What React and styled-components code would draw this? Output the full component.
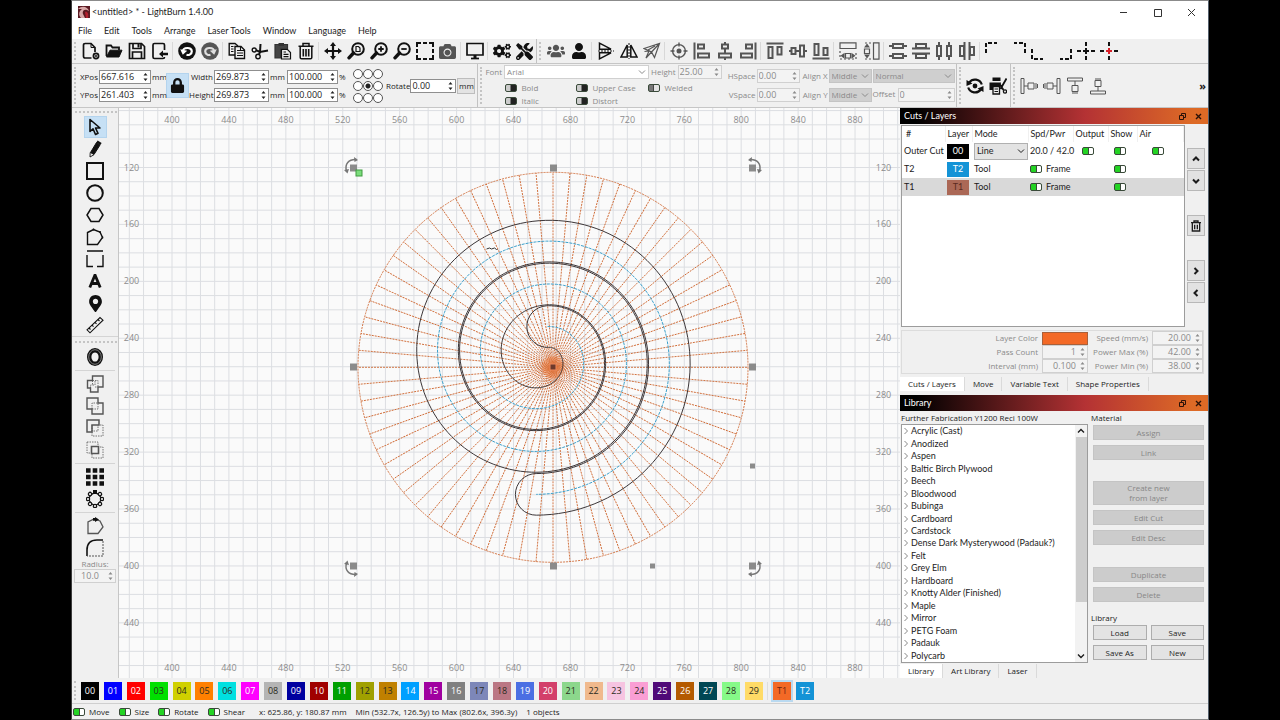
import React, { useState } from 'react';
import styled, { createGlobalStyle, css } from 'styled-components';
import {
    FaUsers,
    FaUser,
    FaCamera,
    FaCogs,
    FaTools,
    FaLock,
    FaMapMarkerAlt,
} from 'react-icons/fa';

const GlobalStyle = createGlobalStyle`
    * {
        box-sizing: border-box;
    }

    body {
        margin: 0;
        background: #000;
        color: #1c1c1c;
        font-family: 'Open Sans', 'Noto Sans', sans-serif;
        font-size: 8px;
        line-height: 12px;
    }

    button, input, select {
        margin: 0;
        font: inherit;
        color: inherit;
    }

    svg {
        display: block;
        flex: none;
    }
`;

const systemText = css`
    font-family: Lato, 'Open Sans', sans-serif;
    font-size: 9px;
    font-weight: normal;
`;

/* ---------- window ---------- */

const Frame = styled.div`
    height: 100vh;
    min-height: 600px;
    padding: 0 71px;
`;

const Window = styled.div`
    display: flex;
    flex-direction: column;
    height: 100%;
    background: #f0f0f0;
    border: 1px solid #8b8b8b;
    border-left-color: #3c3c3c;
    border-right-color: #55606c;
`;

const TitleBar = styled.header`
    display: flex;
    align-items: center;
    height: 22px;
    padding-left: 6px;
    background: #fff;
`;

const Title = styled.h1`
    ${systemText}
    flex: 1;
    margin: 0 0 0 2px;
`;

const WindowButton = styled.button`
    display: flex;
    align-items: center;
    justify-content: center;
    width: 34px;
    height: 20px;
    padding: 0;
    border: 0;
    background: none;
`;

const MenuBar = styled.nav`
    ${systemText}
    display: flex;
    align-items: center;
    height: 16px;
    padding-left: 6px;
    gap: 12px;
    background: #fff;
`;

const MenuLink = styled.a`
    color: inherit;
    text-decoration: none;
`;

/* ---------- toolbars ---------- */

const Toolbar = styled.div`
    display: flex;
    align-items: center;
    height: 25px;
    border-bottom: 1px solid #c6c6c6;
`;

const Grip = styled.div`
    align-self: stretch;
    width: 2px;
    margin: 3px 3px 3px 2px;
    border-left: 2px dotted #c4c4c4;
`;

const Divider = styled.div`
    align-self: stretch;
    width: 1px;
    margin: 3px 2px 3px 1px;
    background: #d8d8d8;
`;

const Section = styled.div`
    align-self: stretch;
    width: 1px;
    background: #c2c2c2;
`;

const IconButton = styled.button`
    display: flex;
    align-items: center;
    justify-content: center;
    flex: none;
    width: 23px;
    height: 22px;
    padding: 0;
    border: 1px solid ${p => (p.$active ? '#b4d4ee' : 'transparent')};
    background: ${p => (p.$active ? '#c6e0f5' : 'none')};
    color: ${p => (p.disabled ? '#555' : '#111')};
`;

const PropertyBar = styled.div`
    display: flex;
    align-items: center;
    height: 44px;
    border-bottom: 1px solid #c6c6c6;
`;

const Geometry = styled.div`
    display: grid;
    grid-template-columns: 19px 52px 13px 22px 24px 55px 16px 51px 10px;
    grid-template-rows: 14px 14px;
    gap: 4px 1px;
    align-items: center;
    color: #222;
`;

const LockButton = styled(IconButton)`
    grid-row: 1 / 3;
    grid-column: 4;
    height: 25px;
`;

const FieldLabel = styled.label`
    white-space: nowrap;
    text-align: right;
`;

const Anchors = styled.div`
    display: grid;
    grid-template-columns: repeat(3, 10px);
    gap: 2px 0;
    margin: 0 3px 0 4px;
`;

const AnchorRadio = styled.input`
    appearance: none;
    width: 10px;
    height: 10px;
    border: 1px solid #555;
    border-radius: 50%;
    background: #fff;

    &:checked {
        background: radial-gradient(#222 0 2px, #fff 3px);
    }
`;

const UnitButton = styled.button`
    width: 18px;
    height: 16px;
    margin: 0 2px 0 1px;
    padding: 0;
    border: 1px solid #bdbdbd;
    background: #e3e3e3;
    text-align: center;
`;

const TextOptions = styled.div`
    display: flex;
    flex-direction: column;
    color: #8a8a8a;
`;

const FontRow = styled.div`
    display: flex;
    align-items: center;
    gap: 2px;
    height: 16px;
`;

const StyleGrid = styled.div`
    display: grid;
    grid-template-columns: 71px 72px auto;
    padding: 1px 0 0 20px;
`;

const Check = styled.label`
    display: flex;
    align-items: center;
    gap: 4px;
    height: 13px;
    white-space: nowrap;
`;

const SpacingGrid = styled.div`
    display: grid;
    grid-template-columns: 28px 43px 27px 43px 82px;
    grid-template-rows: 14px 14px;
    gap: 5px 1px;
    align-items: center;
    margin: 0 1px 0 6px;
    color: #8a8a8a;
`;

const OffsetCell = styled.div`
    display: flex;
    justify-content: space-between;
`;

const More = styled.button`
    margin-left: auto;
    padding: 0 2px;
    border: 0;
    background: none;
    font-size: 11px;
    font-weight: bold;
`;

/* ---------- fields ---------- */

const SpinBox = styled.span`
    display: flex;
    align-items: center;
    width: ${p => (p.$width ? `${p.$width}px` : '100%')};
    height: 14px;
    border: 1px solid ${p => (p.$dim ? '#d0d0d0' : '#8f8f8f')};
    background: ${p => (p.$dim ? '#f3f3f3' : '#fff')};
    color: ${p => (p.$dim ? '#8a8a8a' : '#222')};
    font-size: 9px;
`;

const SpinInput = styled.input`
    flex: 1;
    min-width: 0;
    height: 12px;
    padding: 0 2px 0 1px;
    border: 0;
    outline: 0;
    background: none;
    text-align: ${p => p.$align || 'left'};
`;

const SelectBox = styled.span`
    display: grid;
    align-items: center;
    width: ${p => (p.$width ? `${p.$width}px` : '100%')};
    height: ${p => p.$height || 14}px;
    border: 1px solid ${p => p.$border || '#c4c4c4'};
    background: ${p => p.$fill || '#cfcfcf'};

    svg, select {
        grid-area: 1 / 1;
    }

    svg {
        justify-self: end;
        margin-right: 2px;
        pointer-events: none;
    }
`;

const Select = styled.select`
    appearance: none;
    width: 100%;
    padding: 0 10px 0 2px;
    border: 0;
    outline: 0;
    background: none;
    opacity: 1;
`;

const Toggle = styled.input`
    appearance: none;
    flex: none;
    width: 12px;
    height: 8px;
    border: 1px solid #3a4a3a;
    border-radius: 2px;
    background: linear-gradient(90deg, #ccc 0 4px, #222 5px);

    &:checked {
        background: linear-gradient(90deg, #24d324 0 5px, #3a4a3a 5px 6px, #fff 6px);
    }

    &:checked:disabled {
        background: linear-gradient(90deg, #777 0 4px, #444 4px 5px, #e4e4e4 5px);
    }
`;

/* ---------- main area ---------- */

const Main = styled.main`
    display: flex;
    flex: 1;
    min-height: 0;
`;

const ToolColumn = styled.div`
    display: flex;
    flex-direction: column;
    align-items: center;
    width: 47px;
    padding-top: 3px;
    border-right: 1px solid #c6c6c6;
`;

const HorizontalGrip = styled.div`
    align-self: stretch;
    margin: 0 1px 3px 3px;
    border-top: 2px dotted #c4c4c4;
`;

const HorizontalRule = styled.div`
    align-self: stretch;
    height: 1px;
    margin: ${p => (p.$tight ? '0 0 4px' : '2px 3px')};
    background: #d4d4d4;
`;

const RadiusLabel = styled.label`
    height: 10px;
    color: #8a8a8a;
    line-height: 10px;
`;

const CanvasArea = styled.section`
    flex: 1;
    min-width: 0;
    overflow: hidden;
    background: #fafafa;
`;

const Dock = styled.aside`
    display: grid;
    grid-template-rows: minmax(0, 1fr) minmax(0, 1fr);
    gap: 4px;
    width: 308px;
`;

const Panel = styled.section`
    display: flex;
    flex-direction: column;
    min-height: 0;
`;

const PanelHeader = styled.header`
    display: flex;
    align-items: center;
    height: 16px;
    padding: 0 2px 0 4px;
    background: linear-gradient(90deg, #000 5%, #b43234 60%, #dd6a26 95%);
    color: #fff;
`;

const PanelTitle = styled.h2`
    ${systemText}
    flex: 1;
    margin: 0;
`;

const PanelButton = styled.button`
    display: flex;
    align-items: center;
    justify-content: center;
    width: 16px;
    height: 14px;
    padding: 0;
    border: 0;
    background: none;
    color: #2a1208;
`;

const CutsBody = styled.div`
    display: flex;
    flex: 1;
    min-height: 0;
    margin: 1px 3px 3px 1px;
    gap: 2px;
`;

const TableBox = styled.div`
    flex: 1;
    border: 1px solid #9c9c9c;
    background: #fff;
`;

const LayerTable = styled.table`
    ${systemText}
    width: 100%;
    table-layout: fixed;
    border-collapse: collapse;

    th, td {
        height: 18px;
        padding: 0 0 0 2px;
        font-weight: normal;
        text-align: left;
        white-space: nowrap;
    }

    th {
        height: 16px;
        border-right: 1px solid #f0f0f0;
    }

    th:first-child {
        padding-left: 4px;
    }
`;

const LayerRow = styled.tr`
    background: ${p => (p.$selected ? '#d9d9d9' : 'transparent')};
`;

const LayerChip = styled.span`
    display: block;
    width: 22px;
    height: 15px;
    background: ${p => p.$fill};
    color: ${p => p.$ink};
    line-height: 14px;
    text-align: center;
`;

const CellFlex = styled.span`
    display: flex;
    align-items: center;
    gap: 4px;
    padding-left: ${p => p.$indent || 0}px;
`;

const SideButtons = styled.div`
    display: flex;
    flex-direction: column;
    width: 18px;
    padding-top: 23px;
    gap: 1px;
`;

const SideButton = styled.button`
    display: flex;
    align-items: center;
    justify-content: center;
    height: 21px;
    margin-top: ${p => (p.$apart ? 23 : 0)}px;
    padding: 0;
    border: 1px solid #b8b8b8;
    background: #e2e2e2;
`;

const CutFields = styled.div`
    display: grid;
    grid-template-columns: 1fr 46px 56px 51px;
    gap: 0 4px;
    align-items: center;
    height: 44px;
    margin: 0 4px 3px 1px;
    border: 1px solid #dcdcdc;
    color: #8a8a8a;
`;

const ColorButton = styled.button`
    height: 13px;
    padding: 0;
    border: 1px solid #a9603a;
    background: #f36926;
`;

const Tabs = styled.div`
    display: flex;
    height: 14px;
`;

const Tab = styled.button`
    height: 14px;
    padding: 0 8px;
    border: 0;
    border-right: 1px solid #dadada;
    background: ${p => (p.$active ? '#fff' : 'none')};
    line-height: 14px;
`;

const LibraryBody = styled.div`
    display: grid;
    grid-template-columns: minmax(0, 1fr) 116px;
    flex: 1;
    min-height: 0;
    padding: 0 1px;
`;

const LibraryLeft = styled.div`
    display: flex;
    flex-direction: column;
    min-height: 0;
    margin-right: 3px;
`;

const Caption = styled.div`
    height: 13px;
    line-height: 13px;
    white-space: nowrap;
`;

const TreeBox = styled.div`
    display: flex;
    flex: 1;
    min-height: 0;
    margin-bottom: 1px;
    border: 1px solid #9c9c9c;
    background: #fff;
`;

const Tree = styled.ul`
    ${systemText}
    display: flex;
    flex-direction: column;
    flex: 1;
    margin: 0;
    padding: 0;
    list-style: none;
`;

const TreeItem = styled.li`
    display: flex;
    align-items: center;
    flex: 1;
    min-height: 0;
    gap: 1px;
    white-space: nowrap;

    svg {
        color: #888;
    }
`;

const ScrollTrack = styled.div`
    display: flex;
    flex-direction: column;
    align-items: center;
    width: 12px;
    background: #f2f2f2;
`;

const ScrollThumb = styled.div`
    flex: 167;
    width: 11px;
    background: #cdcdcd;
`;

const ScrollRest = styled.div`
    flex: 48;
`;

const ScrollArrow = styled.button`
    display: flex;
    align-items: center;
    justify-content: center;
    width: 12px;
    height: 12px;
    padding: 0;
    border: 0;
    background: none;
`;

const LibraryRight = styled.div`
    display: flex;
    flex-direction: column;
    padding-right: 1px;
`;

const ButtonStack = styled.div`
    display: flex;
    flex-direction: column;
    gap: 5px;
    padding: 1px 2px 0;
    margin-bottom: ${p => p.$after || 0}px;
`;

const PushButton = styled.button`
    height: ${p => (p.$tall ? 24 : 15)}px;
    padding: 0;
    border: 1px solid ${p => (p.disabled ? '#c4c4c4' : '#adadad')};
    background: ${p => (p.disabled ? '#cccccc' : '#e3e3e3')};
    color: ${p => (p.disabled ? '#878787' : '#1c1c1c')};
    line-height: ${p => (p.$tall ? 10 : 12)}px;
    text-align: center;
`;

const ButtonPair = styled.div`
    display: grid;
    grid-template-columns: 1fr 1fr;
    gap: 5px 4px;
    padding: 1px 2px 0;
`;

/* ---------- palette and status ---------- */

const Palette = styled.div`
    display: flex;
    align-items: center;
    height: 26px;
    border-bottom: 1px solid #cfcfcf;
`;

const SwatchRow = styled.div`
    display: flex;
    justify-content: space-between;
    width: 682px;
    margin: 0 4px 0 2px;
`;

const Swatch = styled.button`
    width: 18px;
    height: 18px;
    padding: 0;
    border: 0;
    background: ${p => p.$fill};
    color: ${p => p.$ink};
    font-size: 9px;
    line-height: 18px;
    text-align: center;
    ${p =>
        p.$active &&
        css`
            outline: 2px solid #b9d9f0;
        `}
`;

const ToolSwatches = styled.div`
    display: flex;
    gap: 5px;
    padding-left: 5px;
    border-left: 1px solid #ddd;
`;

const StatusBar = styled.footer`
    display: flex;
    align-items: center;
    height: 15px;
    padding: 1px 0 0 1px;
    gap: 9px;
    white-space: nowrap;
`;

const Coordinates = styled.span`
    margin-left: 5px;
`;

/* ---------- icons ---------- */

const Icon = ({ size = 18, children, width = 2 }) => (
    <svg
        width={size}
        height={size}
        viewBox="0 0 18 18"
        fill="none"
        stroke="currentColor"
        strokeWidth={width}
        aria-hidden="true"
    >
        {children}
    </svg>
);

const Chevron = ({ dir = 'down', size = 8, width = 1 }) => {
    const turn = { down: 0, left: 90, up: 180, right: 270 }[dir];
    return (
        <svg
            width={size}
            height={size}
            viewBox="0 0 8 8"
            fill="none"
            stroke="currentColor"
            strokeWidth={width}
            aria-hidden="true"
        >
            <path d="M1 2.5L4 5.5L7 2.5" transform={`rotate(${turn} 4 4)`} />
        </svg>
    );
};

const Arrows = () => (
    <svg width="9" height="12" viewBox="0 0 9 12" fill="currentColor" aria-hidden="true">
        <path d="M2.5 4.5L4.5 2L6.5 4.5ZM2.5 7.5L4.5 10L6.5 7.5Z" />
    </svg>
);

const Logo = () => (
    <svg width="12" height="12" viewBox="0 0 12 12" aria-hidden="true">
        <rect width="12" height="12" fill="#5b1a22" />
        <path d="M0 3C4-1 10 1 11 5L9 4C6 3 4 5 5 8L7 12H3C0 9 1 5 4 3Z" fill="#d9a8a8" />
        <path d="M7 6C9 5 11 7 10 12H8Z" fill="#b3202e" />
    </svg>
);

const lens = <path d="M6.5 11L2 15.8" strokeWidth="3.4" strokeLinecap="round" />;

const icons = {
    new: (
        <Icon width={1.7}>
            <path d="M9.5 16H3.2Q1.5 16 1.5 14.3V3.2Q1.5 1.5 3.2 1.5H9L13 5.5V10" />
            <path d="M9 1.5V5.5H13" strokeWidth="1" />
            <circle cx="14" cy="14" r="2.6" />
            <path d="M14 12.8V15.2M12.8 14H15.2" strokeWidth="1" />
        </Icon>
    ),
    open: (
        <Icon width={1.8}>
            <path d="M1.5 14V3.5H6L7.5 5.5H14V8" />
            <path d="M1.5 15L5 8.2H17L14 15Z" fill="currentColor" strokeWidth="1" />
        </Icon>
    ),
    save: (
        <Icon width={1.7}>
            <path d="M1.5 1.5H13.5L16.5 4.5V16.5H1.5Z" />
            <path d="M5 2V6.5H13V2" />
            <path d="M9.5 2H11.5V5.5H9.5Z" fill="currentColor" stroke="none" />
            <path d="M4.5 16V10H13.5V16" />
        </Icon>
    ),
    export: (
        <Icon width={1.7}>
            <path d="M13.5 8V3Q13.5 1.5 12 1.5H3.5Q2 1.5 2 3V15Q2 16.5 3.5 16.5H12Q13.5 16.5 13.5 15" />
            <path d="M8 12L12 8.5V10.8H17V13.2H12V15.5Z" fill="currentColor" stroke="none" />
        </Icon>
    ),
    undo: (
        <Icon>
            <circle cx="9" cy="9" r="8.8" fill="currentColor" stroke="none" />
            <path d="M5 9C5 5.5 13.8 4.5 13.8 9.2C13.8 12 11 13.5 8.5 12.8" stroke="#fff" strokeWidth="2.2" />
            <path d="M2.2 7.2L9.2 8.8L4.8 12.8Z" fill="#fff" stroke="none" />
        </Icon>
    ),
    redo: (
        <Icon>
            <circle cx="9" cy="9" r="8.8" fill="currentColor" stroke="none" />
            <path d="M13 9C13 5.5 4.2 4.5 4.2 9.2C4.2 12 7 13.5 9.5 12.8" stroke="#ddd" strokeWidth="2.2" />
            <path d="M15.8 7.2L8.8 8.8L13.2 12.8Z" fill="#ddd" stroke="none" />
        </Icon>
    ),
    copy: (
        <Icon width={1.4}>
            <path d="M7 13H1.2V1.5H7L10 4" />
            <path d="M7 4.5H13L16.5 8V16.5H7Z" />
            <path d="M9 8.5H12M9 11H15M9 13.5H15M3 4.5H5.5M3 7H5.5M3 9.5H5.5M12.5 5V8.5H16" strokeWidth="1.1" />
        </Icon>
    ),
    cut: (
        <Icon width={1.4}>
            <path d="M17 8.5L9 10L5 8.2" strokeWidth="2" />
            <path d="M9.5 2L9 10L8 12.5" strokeWidth="2" />
            <circle cx="3.2" cy="8" r="2" />
            <circle cx="7" cy="14.5" r="2.2" />
        </Icon>
    ),
    paste: (
        <Icon width={1.2}>
            <path d="M1 2.5H13.5V7H7V16H1Z" fill="#444" stroke="#333" />
            <path d="M4.5 1H10V4H4.5Z" fill="#333" stroke="none" />
            <path d="M7.5 7.5H13.5L16.5 10.5V17H7.5Z" fill="#eee" />
            <path d="M9.5 10H12M9.5 12.3H14.5M9.5 14.6H14.5" />
        </Icon>
    ),
    trash: (
        <Icon width={1.5}>
            <path d="M1.5 4.2H16.5M6 4V1.5H12V4M3.2 4.5V15.5Q3.2 16.8 4.5 16.8H13.5Q14.8 16.8 14.8 15.5V4.5" />
            <path d="M6.3 7V14.5M9 7V14.5M11.7 7V14.5" strokeWidth="1.6" />
        </Icon>
    ),
    move: (
        <Icon width={2.2}>
            <path d="M9 3V15M3 9H15" />
            <path
                d="M9 0L12 4H6ZM9 18L12 14H6ZM0 9L4 6V12ZM18 9L14 6V12Z"
                fill="currentColor"
                stroke="none"
            />
        </Icon>
    ),
    zoomFit: (
        <Icon>
            <circle cx="11" cy="7" r="5.8" />
            <path d="M9 4.5H11.5L13 6V9.5H9Z" strokeWidth="1.2" />
            {lens}
        </Icon>
    ),
    zoomIn: (
        <Icon>
            <circle cx="11" cy="7" r="5.8" />
            <path d="M11 4.3V9.7M8.3 7H13.7" strokeWidth="1.8" />
            {lens}
        </Icon>
    ),
    zoomOut: (
        <Icon>
            <circle cx="11" cy="7" r="5.8" />
            <path d="M8.3 7H13.7" strokeWidth="1.8" />
            {lens}
        </Icon>
    ),
    marquee: (
        <Icon>
            <path d="M1 5V1H5M7 1H11M13 1H17V5M17 7V11M17 13V17H13M11 17H7M5 17H1V13M1 11V7" />
        </Icon>
    ),
    camera: <FaCamera size={17} />,
    monitor: (
        <Icon width={1.7}>
            <path d="M1 1.5H17V13H1Z" />
            <path d="M9 13V16" strokeWidth="3" />
            <path d="M5 16.5H13" />
        </Icon>
    ),
    gears: <FaCogs size={18} />,
    tools: <FaTools size={17} />,
    group: <FaUsers size={18} />,
    user: <FaUser size={16} />,
    flipV: (
        <Icon width={1.5}>
            <path d="M2.5 1.2L14 7.2H2.5ZM2.5 16.8L14 10.8H2.5Z" />
            <path d="M1 9H17" strokeDasharray="2 1" strokeWidth="1" />
        </Icon>
    ),
    flipH: (
        <Icon width={1.5}>
            <path d="M7.2 3V15H1ZM10.8 3V15H17Z" />
            <path d="M9 1V17" strokeDasharray="2 1" strokeWidth="1" />
        </Icon>
    ),
    send: (
        <Icon width={1.2}>
            <path d="M1 6.5L16.5 1.5L11.5 15.5L8.5 10ZM8.5 10L16.5 1.5M1.5 9.5L6 9L3 16L15 3M5 8L12 4" />
        </Icon>
    ),
    target: (
        <Icon width={1.4}>
            <circle cx="9" cy="9" r="6.4" />
            <circle cx="9" cy="9" r="2.5" fill="currentColor" stroke="none" />
            <path d="M9 0.5V4.5M9 13.5V17.5M0.5 9H4.5M13.5 9H17.5" />
        </Icon>
    ),
    alignLeft: (
        <Icon>
            <path d="M1.5 0.5V17.5M5 2.5H11V6.5H5ZM5 11.5H16V15.5H5Z" />
        </Icon>
    ),
    alignCenter: (
        <Icon>
            <path d="M9 0V2.5M9 6.5V11M9 15.5V18M6 2.5H12V6.5H6ZM3 11.5H15V15.5H3Z" />
        </Icon>
    ),
    alignRight: (
        <Icon>
            <path d="M16.5 0.5V17.5M13 2.5H7V6.5H13ZM13 11.5H2V15.5H13Z" />
        </Icon>
    ),
    alignTop: (
        <Icon>
            <path d="M0.5 1.5H17.5M2.5 5H6.5V16H2.5ZM11.5 5H15.5V12.5H11.5Z" />
        </Icon>
    ),
    alignMiddle: (
        <Icon>
            <path d="M0 9H2.5M7 9H10.5M15 9H18M2.5 6H6.5V12H2.5ZM11 3.5H15V14.5H11Z" />
        </Icon>
    ),
    alignBottom: (
        <Icon>
            <path d="M0.5 16.5H17.5M2.5 13H6.5V2H2.5ZM11.5 13H15.5V6H11.5Z" />
        </Icon>
    ),
    sameWidth: (
        <Icon width={1.2}>
            <path d="M1 0.8H17V6.5H1Z" />
            <path d="M1 9V17H17V9" strokeDasharray="2 2" />
            <path d="M6.5 11.5H11.5V16H6.5Z" />
            <path d="M2.5 13.8L5 12V15.6ZM15.5 13.8L13 12V15.6Z" fill="currentColor" />
        </Icon>
    ),
    sameHeight: (
        <Icon width={1.2}>
            <path d="M11.5 0.8H17V17.2H11.5Z" />
            <path d="M9 1H1M9 17H1" strokeDasharray="2 2" />
            <path d="M2.5 7H7.5V11.5H2.5Z" />
            <path d="M5 2.5L3.2 5H6.8ZM5 15.5L3.2 13H6.8Z" fill="currentColor" />
        </Icon>
    ),
    distV: (
        <Icon>
            <path d="M4 2H14V6H4ZM4 12H14V16H4ZM0 4H4M14 4H18M0 14H4M14 14H18" />
        </Icon>
    ),
    distVEdge: (
        <Icon>
            <path d="M4 2H14V6H4ZM4 12H14V16H4ZM0 6.5H18M0 11.5H18" />
        </Icon>
    ),
    distH: (
        <Icon>
            <path d="M2 4H6V14H2ZM12 4H16V14H12ZM4 0V4M4 14V18M14 0V4M14 14V18" />
        </Icon>
    ),
    distHEdge: (
        <Icon>
            <path d="M2 4H6V14H2ZM12 5H16V13H12ZM6.5 0V18M11.5 0V18" />
        </Icon>
    ),
    cornerTL: (
        <Icon>
            <path d="M1 11V1H12" strokeDasharray="4 2" />
        </Icon>
    ),
    cornerTR: (
        <Icon>
            <path d="M17 11V1H6" strokeDasharray="4 2" />
        </Icon>
    ),
    cornerBL: (
        <Icon>
            <path d="M1 7V17H12" strokeDasharray="4 2" />
        </Icon>
    ),
    cornerBR: (
        <Icon>
            <path d="M17 7V17H6" strokeDasharray="4 2" />
        </Icon>
    ),
    center: (
        <Icon>
            <path d="M9 0V4M9 14V18M0 9H4M14 9H18" />
            <path d="M9 6V12M6 9H12" />
        </Icon>
    ),
    centerRed: (
        <Icon>
            <path d="M9 0V4M9 14V18M0 9H4M14 9H18" />
            <path d="M9 6V12M6 9H12" stroke="#d81e28" />
        </Icon>
    ),
    select: (
        <Icon width={1.6}>
            <path d="M4 1.5V13.5L7 10.8L9.5 16.5L12 15.3L9.5 10H14Z" strokeLinejoin="round" />
        </Icon>
    ),
    pencil: (
        <Icon>
            <path d="M10.5 2.5L14 5L8 14.5L4.5 12.5Z" fill="currentColor" strokeWidth="1" />
            <path d="M4.2 12.5L4 17L8 14.7" strokeWidth="0.9" />
            <path d="M11 1.5L15 4" strokeWidth="2.4" />
        </Icon>
    ),
    rect: (
        <Icon>
            <path d="M1 1H17V17H1Z" />
        </Icon>
    ),
    circle: (
        <Icon>
            <circle cx="9" cy="9" r="7.8" />
        </Icon>
    ),
    hexagon: (
        <Icon width={1.5}>
            <path d="M5 2.5H13L17 9L13 15.5H5L1 9Z" />
        </Icon>
    ),
    polygon: (
        <Icon width={1.4}>
            <path d="M1.5 16.5V4.5L7.5 1.5L14 4L16.5 9.5L11.5 16.5Z" />
            <path d="M6.8 1.5H8.2M13.3 4H14.7M15.8 9.5H17.2" strokeWidth="2" />
        </Icon>
    ),
    frame: (
        <Icon width={1.4}>
            <path d="M1 1H17M1 5V16.5H7M11 16.5H17V5" />
        </Icon>
    ),
    text: (
        <Icon>
            <path d="M3.8 15.5L8.8 3.5H9.2L14.2 15.5M5.5 11.5H12.5" strokeWidth="2.8" />
        </Icon>
    ),
    pin: <FaMapMarkerAlt size={17} />,
    ruler: (
        <Icon width={1.1}>
            <path d="M1 13.8L14 1.5L17 4.2L4 16.8Z" />
            <path d="M3 12L4.5 13.5M6 9.2L7.5 10.7M9 6.3L10.5 7.8M12 3.5L13.5 5" />
        </Icon>
    ),
    offset: (
        <Icon>
            <ellipse cx="9" cy="9" rx="5.8" ry="6.8" strokeWidth="4.4" />
            <ellipse cx="9" cy="9" rx="6.3" ry="7.3" stroke="#999" strokeWidth="0.8" />
        </Icon>
    ),
    weld: (
        <Icon width={1.4}>
            <path d="M1.5 5.5H6.5V1H17V12H12V17H4.5V13H1.5Z" />
            <path d="M6.5 5.5H12V12M4.5 13V10H9V5.5M6.5 5.5V10M9 12H12" strokeWidth="0.8" strokeDasharray="1.5 1" />
        </Icon>
    ),
    union: (
        <Icon width={1.4}>
            <path d="M1 1H12V6H17V17H6V12H1Z" />
            <path d="M6 12V6H12V12Z" strokeWidth="0.8" strokeDasharray="1.5 1" />
        </Icon>
    ),
    subtract: (
        <Icon width={1.5}>
            <path d="M1 1H13V6H6V13H1Z" />
            <path d="M6 13V17H17V6H13M6 6V12H12V6" strokeWidth="0.8" strokeDasharray="1.5 1" />
        </Icon>
    ),
    intersect: (
        <Icon width={1.6}>
            <path d="M5.5 5.5H12.5V12.5H5.5Z" />
            <path d="M1 1H12V5M1 1V12H5M6 13V17H17V6H13" strokeWidth="0.8" strokeDasharray="1.5 1" />
        </Icon>
    ),
    grid: (
        <Icon>
            <path d="M0 2.5H18M0 9H18M0 15.5H18" strokeWidth="4.4" strokeDasharray="4.6 2.1" />
        </Icon>
    ),
    ring: (
        <Icon width={1.2}>
            <circle cx="9" cy="9" r="5.8" />
            {[45, 90, 135, 180, 225, 270, 315].map(a => (
                <circle key={a} cx="9" cy="2" r="1.7" fill="#f0f0f0" transform={`rotate(${a} 9 9)`} />
            ))}
            <path d="M7 0H11V4H7Z" fill="currentColor" stroke="none" />
        </Icon>
    ),
    startPoint: (
        <Icon width={1.3}>
            <path d="M2 16.5V5L8 2L14 4L17 10L12 16.5Z" />
            <path d="M7 1H9V0L13 2.5L9 5V3.8H7Z" fill="#111" stroke="none" />
        </Icon>
    ),
    radius: (
        <Icon width={1.6}>
            <path d="M1 17V11Q1 1 11 1H17" stroke="#111" />
            <path d="M17 2V17H1" strokeWidth="1" strokeDasharray="2 1" />
        </Icon>
    ),
    rotary: (
        <Icon width={2.2}>
            <path d="M3.2 5.5A7.2 7.2 0 0 1 15.8 7.5M14.8 12.5A7.2 7.2 0 0 1 2.2 10.5" />
            <circle cx="9" cy="9" r="2.4" fill="currentColor" stroke="none" />
            <path d="M0.5 3V9L6.5 6.5ZM17.5 15V9L11.5 11.5Z" fill="currentColor" stroke="none" />
        </Icon>
    ),
    printCut: (
        <Icon width={1.3}>
            <path d="M3.5 0.5H11.5V4H3.5ZM0.5 5.5H12L11 13H0.5Z" fill="currentColor" stroke="none" />
            <path d="M4 9.5H10.5V17H4Z" fill="#f0f0f0" />
            <path d="M5.5 12H9M5.5 14.5H9" strokeWidth="1" />
            <path d="M17.5 1.5L11.5 12M11 7.5L14.5 13" strokeWidth="1.8" />
            <circle cx="16" cy="14.5" r="1.6" />
        </Icon>
    ),
    dockLeft: (
        <Icon width={1}>
            <path d="M1 1.5H4V16.5H1ZM8 6H14V12H8ZM4 9H8M16 6V12M17.5 7V11" />
        </Icon>
    ),
    dockRight: (
        <Icon width={1}>
            <path d="M14 1.5H17V16.5H14ZM4 6H10V12H4ZM10 9H14M2 6V12M0.5 7V11" />
        </Icon>
    ),
    dockTop: (
        <Icon width={1}>
            <path d="M1.5 1H16.5V4H1.5ZM6 8.5H12V14.5H6ZM9 4V8.5M6 16H12" />
        </Icon>
    ),
    dockBottom: (
        <Icon width={1}>
            <path d="M1.5 14H16.5V17H1.5ZM6 3.5H12V9.5H6ZM9 9.5V14M6 2H12" />
        </Icon>
    ),
};

/* ---------- data ---------- */

// A trailing "*" marks a tool that is off for the current selection.
const fileTools = [
    ['new', 'open', 'save', 'export'],
    ['undo', 'redo*'],
    ['copy', 'cut', 'paste', 'trash'],
    ['move', 'zoomFit', 'zoomIn', 'zoomOut', 'marquee', 'camera*'],
    ['monitor'],
    ['gears', 'tools'],
];

const arrangeTools = [
    ['group*', 'user'],
    ['flipV', 'flipH', 'send*'],
    ['target*', 'alignLeft*', 'alignCenter*', 'alignRight*'],
    ['alignTop*', 'alignMiddle*', 'alignBottom*'],
    ['sameWidth*', 'sameHeight*'],
    ['distV*', 'distVEdge*', 'distH*', 'distHEdge*'],
    ['cornerTL', 'cornerTR', 'cornerBL', 'cornerBR', 'center', 'centerRed'],
];

const drawTools = ['select', 'pencil', 'rect', 'circle', 'hexagon', 'polygon', 'frame', 'text', 'pin', 'ruler'];

const dark = '#2b2b20';

const palette = [
    ['#000000', '#fff'],
    ['#0000ff', '#fff'],
    ['#ff0000', '#fff'],
    ['#00e000', dark],
    ['#d0d000', dark],
    ['#ff8000', dark],
    ['#00e0e0', dark],
    ['#ff00ff', '#fff'],
    ['#b4b4b4', dark],
    ['#0000a0', '#fff'],
    ['#a00000', '#fff'],
    ['#00a000', '#fff'],
    ['#a0a000', dark],
    ['#c08000', dark],
    ['#00a0ff', '#fff'],
    ['#a000a0', '#fff'],
    ['#808080', '#fff'],
    ['#7d87b9', dark],
    ['#bb7784', dark],
    ['#4a6fe3', '#fff'],
    ['#d33f6a', '#fff'],
    ['#8cd78c', dark],
    ['#f0b98d', dark],
    ['#f6c4e1', dark],
    ['#fa9ed4', dark],
    ['#500a78', '#fff'],
    ['#b45a00', '#fff'],
    ['#004754', '#fff'],
    ['#86fa88', dark],
    ['#ffdb66', dark],
];

const materials = [
    'Acrylic (Cast)',
    'Anodized',
    'Aspen',
    'Baltic Birch Plywood',
    'Beech',
    'Bloodwood',
    'Bubinga',
    'Cardboard',
    'Cardstock',
    'Dense Dark Mysterywood (Padauk?)',
    'Felt',
    'Grey Elm',
    'Hardboard',
    'Knotty Alder (Finished)',
    'Maple',
    'Mirror',
    'PETG Foam',
    'Padauk',
    'Polycarb',
];

/* ---------- canvas drawing ---------- */

const SCALE = 1.423;
const toX = mm => 53.5 + (mm - 400) * SCALE;
const toY = mm => 59.5 + (mm - 120) * SCALE;

const range = (from, to, step) => {
    const out = [];
    for (let v = from; v <= to; v += step) out.push(v);
    return out;
};

// Archimedean spiral, clockwise from the top, as a point at "turn" turns.
// side shifts the point along the normal: +1 is outwards.
const PITCH = 43;
const HALF = 20.8;

const spiralPoint = (turn, side) => {
    const a = turn * 2 * Math.PI;
    const r = 29.7 + PITCH * turn;
    const dr = PITCH / (2 * Math.PI);
    const dx = dr * Math.sin(a) + r * Math.cos(a);
    const dy = -dr * Math.cos(a) + r * Math.sin(a);
    const len = Math.hypot(dx, dy);
    return [
        424.2 + r * Math.sin(a) + (side * HALF * dy) / len,
        249 - r * Math.cos(a) - (side * HALF * dx) / len,
    ];
};

const spiralLine = side =>
    range(10, 1003, 3).map(i =>
        spiralPoint(i / 400, side)
            .map(n => n.toFixed(2))
            .join(' ')
    );

const middlePath = `M${spiralLine(0).join('L')}`;
const arc = `A${HALF} ${HALF} 0 0 1`;
const outer = spiralLine(1);
const inner = spiralLine(-1).reverse();
const outlinePath = `M${outer.join('L')}${arc} ${inner.join('L')}${arc} ${outer[0]}Z`;

const handles = [
    [235, 60, 7],
    [435, 60, 7],
    [634, 60, 7],
    [235, 259, 7],
    [634, 259, 7],
    [235, 458, 7],
    [435, 458, 7],
    [634, 458, 7],
    [634, 358, 5],
    [534, 458, 5],
];

const Drawing = () => (
    <svg
        width="100%"
        height="100%"
        viewBox="0 0 782 570"
        preserveAspectRatio="xMidYMid slice"
        role="img"
        aria-label="Work area"
    >
        <g stroke="#dcdee2" strokeWidth="1">
            {range(370, 910, 10).map(mm => (
                <path key={mm} d={`M${toX(mm)} 0V570`} />
            ))}
            {range(80, 480, 10).map(mm => (
                <path key={mm} d={`M0 ${toY(mm)}H782`} />
            ))}
        </g>
        <g fill="#8c8c8c" fontSize="9" textAnchor="middle">
            {range(400, 880, 40).map(mm => (
                <React.Fragment key={mm}>
                    <text x={toX(mm)} y="15">
                        {mm}
                    </text>
                    <text x={toX(mm)} y="563">
                        {mm}
                    </text>
                </React.Fragment>
            ))}
            {range(120, 440, 40).map(mm => (
                <React.Fragment key={mm}>
                    <text x="13" y={toY(mm) + 3}>
                        {mm}
                    </text>
                    <text x="765" y={toY(mm) + 3}>
                        {mm}
                    </text>
                </React.Fragment>
            ))}
        </g>
        <g fill="none" stroke="#cf6a35" strokeWidth="0.9" strokeDasharray="2 1">
            <circle cx="434.5" cy="259.3" r="195" />
            {range(0, 355, 5).map(a => (
                <path
                    key={a}
                    d="M434.5 259.3V64.3"
                    strokeDashoffset={a % 3}
                    transform={`rotate(${a} 434.5 259.3)`}
                />
            ))}
        </g>
        <circle cx="434.5" cy="259.3" r="11" fill="#f07a3c" opacity="0.4" />
        <path d={middlePath} fill="none" stroke="#3aa0cc" strokeWidth="1" strokeDasharray="3 1" />
        <path d={outlinePath} fill="none" stroke="#3c3638" strokeWidth="1" />
        <path d="M368 141L371 140L373 141L376 140L378 141.5H379" fill="none" stroke="#333" />
        <g fill="#8b8b8b">
            {handles.map(([x, y, s]) => (
                <rect key={`${x}-${y}`} x={x - s / 2} y={y - s / 2} width={s} height={s} />
            ))}
        </g>
        <rect x="237.5" y="62" width="6" height="6" fill="#7bdc7b" stroke="#3f9a3f" />
        <rect x="431.5" y="256" width="6" height="6" fill="#6e3a2c" stroke="#f08a5c" />
        {/* rotation arrows, one drawing mirrored into every corner */}
        {[
            [1, 1, 0, 0],
            [-1, 1, 869, 0],
            [1, -1, 0, 518],
            [-1, -1, 869, 518],
        ].map(([sx, sy, tx, ty]) => (
            <g key={`${sx}${sy}`} transform={`translate(${tx} ${ty}) scale(${sx} ${sy})`}>
                <path d="M228 63C226 56 230 51 238 51.5" fill="none" stroke="#777" strokeWidth="1.5" />
                <path d="M225.5 62L230.5 61L229 65.5ZM235.5 49L236 54L239.5 52Z" fill="#777" />
            </g>
        ))}
    </svg>
);

/* ---------- components ---------- */

const Spin = ({ id, value, width, disabled, align, label }) => (
    <SpinBox $width={width} $dim={disabled}>
        <SpinInput id={id} defaultValue={value} disabled={disabled} $align={align} aria-label={label} />
        <Arrows />
    </SpinBox>
);

const Combo = ({ id, value, label, disabled, ...box }) => (
    <SelectBox {...box}>
        <Select id={id} aria-label={label} disabled={disabled}>
            <option>{value}</option>
        </Select>
        <Chevron />
    </SelectBox>
);

const ToolGroups = ({ groups }) =>
    groups.map((group, i) => (
        <React.Fragment key={group[0]}>
            {i > 0 && <Divider />}
            {group.map(entry => {
                const name = entry.replace('*', '');
                return (
                    <IconButton key={name} aria-label={name} disabled={entry !== name}>
                        {icons[name]}
                    </IconButton>
                );
            })}
        </React.Fragment>
    ));

const Properties = () => (
    <PropertyBar>
        <Grip />
        <Geometry>
            <FieldLabel htmlFor="xpos">XPos</FieldLabel>
            <Spin id="xpos" value="667.616" />
            <span>mm</span>
            <LockButton $active aria-label="Lock aspect ratio">
                <FaLock size={15} />
            </LockButton>
            <FieldLabel htmlFor="width">Width</FieldLabel>
            <Spin id="width" value="269.873" />
            <span>mm</span>
            <Spin label="Width percent" value="100.000" />
            <span>%</span>
            <FieldLabel htmlFor="ypos">YPos</FieldLabel>
            <Spin id="ypos" value="261.403" />
            <span>mm</span>
            <FieldLabel htmlFor="height">Height</FieldLabel>
            <Spin id="height" value="269.873" />
            <span>mm</span>
            <Spin label="Height percent" value="100.000" />
            <span>%</span>
        </Geometry>
        <Anchors>
            {range(0, 8, 1).map(i => (
                <AnchorRadio
                    key={i}
                    type="radio"
                    name="anchor"
                    aria-label={`Anchor ${i + 1}`}
                    defaultChecked={i === 4}
                />
            ))}
        </Anchors>
        <FieldLabel htmlFor="rotate">Rotate</FieldLabel>
        <Spin id="rotate" value="0.00" width={46} />
        <UnitButton>mm</UnitButton>
        <Section />
        <Grip />
        <TextOptions>
            <FontRow>
                <FieldLabel htmlFor="font">Font</FieldLabel>
                <Combo id="font" value="Arial" $width={145} $fill="#fff" $border="#d0d0d0" disabled />
                <FieldLabel htmlFor="text-height">Height</FieldLabel>
                <Spin id="text-height" value="25.00" width={44} disabled />
            </FontRow>
            <StyleGrid>
                <Check>
                    <Toggle type="checkbox" disabled />
                    Bold
                </Check>
                <Check>
                    <Toggle type="checkbox" disabled />
                    Upper Case
                </Check>
                <Check>
                    <Toggle type="checkbox" disabled defaultChecked />
                    Welded
                </Check>
                <Check>
                    <Toggle type="checkbox" disabled />
                    Italic
                </Check>
                <Check>
                    <Toggle type="checkbox" disabled />
                    Distort
                </Check>
            </StyleGrid>
        </TextOptions>
        <SpacingGrid>
            <FieldLabel htmlFor="hspace">HSpace</FieldLabel>
            <Spin id="hspace" value="0.00" disabled />
            <FieldLabel htmlFor="align-x">Align X</FieldLabel>
            <Combo id="align-x" value="Middle" disabled />
            <Combo label="Text mode" value="Normal" disabled />
            <FieldLabel htmlFor="vspace">VSpace</FieldLabel>
            <Spin id="vspace" value="0.00" disabled />
            <FieldLabel htmlFor="align-y">Align Y</FieldLabel>
            <Combo id="align-y" value="Middle" disabled />
            <OffsetCell>
                <FieldLabel htmlFor="text-offset">Offset</FieldLabel>
                <Spin id="text-offset" value="0" width={57} disabled />
            </OffsetCell>
        </SpacingGrid>
        <Section />
        <Grip />
        <IconButton aria-label="Rotary">{icons.rotary}</IconButton>
        <IconButton aria-label="Print and cut">{icons.printCut}</IconButton>
        <Section />
        <Grip />
        {['dockLeft', 'dockRight', 'dockTop', 'dockBottom'].map(name => (
            <IconButton key={name} aria-label={name} disabled>
                {icons[name]}
            </IconButton>
        ))}
        <More aria-label="More tools">»</More>
    </PropertyBar>
);

const Tools = () => {
    const [active, setActive] = useState('select');

    return (
        <ToolColumn>
            <HorizontalGrip />
            {drawTools.map(name => (
                <IconButton
                    key={name}
                    aria-label={name}
                    $active={name === active}
                    onClick={() => setActive(name)}
                >
                    {icons[name]}
                </IconButton>
            ))}
            <HorizontalRule $tight />
            <HorizontalGrip />
            <IconButton aria-label="offset">{icons.offset}</IconButton>
            <HorizontalRule />
            {['weld', 'union', 'subtract', 'intersect'].map(name => (
                <IconButton key={name} aria-label={name} disabled>
                    {icons[name]}
                </IconButton>
            ))}
            <HorizontalRule />
            <IconButton aria-label="grid array">{icons.grid}</IconButton>
            <IconButton aria-label="circular array">{icons.ring}</IconButton>
            <HorizontalRule />
            <IconButton aria-label="start point" disabled>
                {icons.startPoint}
            </IconButton>
            <IconButton aria-label="radius" disabled>
                {icons.radius}
            </IconButton>
            <RadiusLabel htmlFor="radius">Radius:</RadiusLabel>
            <Spin id="radius" value="10.0" width={42} disabled align="center" />
        </ToolColumn>
    );
};

const PanelTop = ({ title }) => (
    <PanelHeader>
        <PanelTitle>{title}</PanelTitle>
        <PanelButton aria-label="Float">
            <svg width="7" height="7" viewBox="0 0 7 7" fill="none" stroke="currentColor">
                <path d="M2.5 2.5V.5H6.5V4.5H4.5M.5 2.5H4.5V6.5H.5Z" />
            </svg>
        </PanelButton>
        <PanelButton aria-label="Close">
            <svg width="7" height="7" viewBox="0 0 7 7" fill="none" stroke="currentColor" strokeWidth="1.4">
                <path d="M1 1L6 6M6 1L1 6" />
            </svg>
        </PanelButton>
    </PanelHeader>
);

const TabRow = ({ names }) => (
    <Tabs role="tablist">
        {names.map((name, i) => (
            <Tab key={name} role="tab" aria-selected={i === 0} $active={i === 0}>
                {name}
            </Tab>
        ))}
    </Tabs>
);

const ToolLayer = ({ name, fill, ink, selected }) => (
    <LayerRow $selected={selected}>
        <td>{name}</td>
        <td>
            <LayerChip $fill={fill} $ink={ink}>
                {name}
            </LayerChip>
        </td>
        <td>Tool</td>
        <td colSpan="2">
            <CellFlex>
                <Toggle type="checkbox" defaultChecked id={`frame-${name}`} />
                <label htmlFor={`frame-${name}`}>Frame</label>
            </CellFlex>
        </td>
        <td>
            <CellFlex $indent={4}>
                <Toggle type="checkbox" defaultChecked aria-label={`Show ${name}`} />
            </CellFlex>
        </td>
        <td />
    </LayerRow>
);

const CutsPanel = () => (
    <Panel>
        <PanelTop title="Cuts / Layers" />
        <CutsBody>
            <TableBox>
                <LayerTable>
                    <colgroup>
                        <col style={{ width: 43 }} />
                        <col style={{ width: 27 }} />
                        <col style={{ width: 56 }} />
                        <col style={{ width: 45 }} />
                        <col style={{ width: 35 }} />
                        <col style={{ width: 29 }} />
                        <col />
                    </colgroup>
                    <thead>
                        <tr>
                            <th>#</th>
                            <th>Layer</th>
                            <th>Mode</th>
                            <th>Spd/Pwr</th>
                            <th>Output</th>
                            <th>Show</th>
                            <th>Air</th>
                        </tr>
                    </thead>
                    <tbody>
                        <LayerRow>
                            <td>Outer Cut</td>
                            <td>
                                <LayerChip $fill="#000" $ink="#fff">
                                    00
                                </LayerChip>
                            </td>
                            <td>
                                <Combo label="Mode" value="Line" $height={17} $fill="#e3e3e3" $border="#b0b0b0" />
                            </td>
                            <td>20.0 / 42.0</td>
                            <td>
                                <CellFlex $indent={7}>
                                    <Toggle type="checkbox" defaultChecked aria-label="Output 00" />
                                </CellFlex>
                            </td>
                            <td>
                                <CellFlex $indent={4}>
                                    <Toggle type="checkbox" defaultChecked aria-label="Show 00" />
                                </CellFlex>
                            </td>
                            <td>
                                <CellFlex $indent={13}>
                                    <Toggle type="checkbox" defaultChecked aria-label="Air 00" />
                                </CellFlex>
                            </td>
                        </LayerRow>
                        <ToolLayer name="T2" fill="#1493d6" ink="#fff" />
                        <ToolLayer name="T1" fill="#ab6856" ink="#5a2a20" selected />
                    </tbody>
                </LayerTable>
            </TableBox>
            <SideButtons>
                <SideButton aria-label="Move up">
                    <Chevron dir="up" width={2} />
                </SideButton>
                <SideButton aria-label="Move down">
                    <Chevron dir="down" width={2} />
                </SideButton>
                <SideButton aria-label="Delete layer" $apart>
                    <Icon size={12}>
                        <path d="M1.5 4H16.5M6 4V1.5H12V4M3.5 4.5V16.5H14.5V4.5M7 7V14M11 7V14" />
                    </Icon>
                </SideButton>
                <SideButton aria-label="Next" $apart>
                    <Chevron dir="right" width={2} />
                </SideButton>
                <SideButton aria-label="Previous">
                    <Chevron dir="left" width={2} />
                </SideButton>
            </SideButtons>
        </CutsBody>
        <CutFields>
            <FieldLabel htmlFor="layer-color">Layer Color</FieldLabel>
            <ColorButton id="layer-color" />
            <FieldLabel htmlFor="speed">Speed (mm/s)</FieldLabel>
            <Spin id="speed" value="20.00" align="right" disabled />
            <FieldLabel htmlFor="passes">Pass Count</FieldLabel>
            <Spin id="passes" value="1" align="right" disabled />
            <FieldLabel htmlFor="power-max">Power Max (%)</FieldLabel>
            <Spin id="power-max" value="42.00" align="right" disabled />
            <FieldLabel htmlFor="interval">Interval (mm)</FieldLabel>
            <Spin id="interval" value="0.100" align="right" disabled />
            <FieldLabel htmlFor="power-min">Power Min (%)</FieldLabel>
            <Spin id="power-min" value="38.00" align="right" disabled />
        </CutFields>
        <TabRow names={['Cuts / Layers', 'Move', 'Variable Text', 'Shape Properties']} />
    </Panel>
);

const LibraryPanel = () => (
    <Panel>
        <PanelTop title="Library" />
        <LibraryBody>
            <LibraryLeft>
                <Caption>Further Fabrication Y1200 Reci 100W</Caption>
                <TreeBox>
                    <Tree>
                        {materials.map(name => (
                            <TreeItem key={name}>
                                <Chevron dir="right" />
                                {name}
                            </TreeItem>
                        ))}
                    </Tree>
                    <ScrollTrack>
                        <ScrollArrow aria-label="Scroll up">
                            <Chevron dir="up" width={1.4} />
                        </ScrollArrow>
                        <ScrollThumb />
                        <ScrollRest />
                        <ScrollArrow aria-label="Scroll down">
                            <Chevron dir="down" width={1.4} />
                        </ScrollArrow>
                    </ScrollTrack>
                </TreeBox>
            </LibraryLeft>
            <LibraryRight>
                <Caption>Material</Caption>
                <ButtonStack $after={20}>
                    <PushButton disabled>Assign</PushButton>
                    <PushButton disabled>Link</PushButton>
                </ButtonStack>
                <ButtonStack $after={21}>
                    <PushButton disabled $tall>
                        Create new
                        <br />
                        from layer
                    </PushButton>
                    <PushButton disabled>Edit Cut</PushButton>
                    <PushButton disabled>Edit Desc</PushButton>
                </ButtonStack>
                <ButtonStack $after={9}>
                    <PushButton disabled>Duplicate</PushButton>
                    <PushButton disabled>Delete</PushButton>
                </ButtonStack>
                <Caption>Library</Caption>
                <ButtonPair>
                    <PushButton>Load</PushButton>
                    <PushButton>Save</PushButton>
                    <PushButton>Save As</PushButton>
                    <PushButton>New</PushButton>
                </ButtonPair>
            </LibraryRight>
        </LibraryBody>
        <TabRow names={['Library', 'Art Library', 'Laser']} />
    </Panel>
);

const App = () => (
    <Frame>
        <GlobalStyle />
        <Window>
            <TitleBar>
                <Logo />
                <Title>&lt;untitled&gt; * - LightBurn 1.4.00</Title>
                <WindowButton aria-label="Minimize">
                    <svg width="9" height="9" viewBox="0 0 9 9" stroke="#333">
                        <path d="M1 4.5H8" />
                    </svg>
                </WindowButton>
                <WindowButton aria-label="Maximize">
                    <svg width="9" height="9" viewBox="0 0 9 9" fill="none" stroke="#333">
                        <path d="M1.5 1.5H8.5V8.5H1.5Z" />
                    </svg>
                </WindowButton>
                <WindowButton aria-label="Close">
                    <svg width="9" height="9" viewBox="0 0 9 9" stroke="#333">
                        <path d="M1 1L8 8M8 1L1 8" />
                    </svg>
                </WindowButton>
            </TitleBar>
            <MenuBar>
                {['File', 'Edit', 'Tools', 'Arrange', 'Laser Tools', 'Window', 'Language', 'Help'].map(name => (
                    <MenuLink key={name} href="#">
                        {name}
                    </MenuLink>
                ))}
            </MenuBar>
            <Toolbar>
                <Grip />
                <ToolGroups groups={fileTools} />
                <Section />
                <Grip />
                <ToolGroups groups={arrangeTools} />
            </Toolbar>
            <Properties />
            <Main>
                <Tools />
                <CanvasArea>
                    <Drawing />
                </CanvasArea>
                <Dock>
                    <CutsPanel />
                    <LibraryPanel />
                </Dock>
            </Main>
            <Palette>
                <Grip />
                <SwatchRow>
                    {palette.map(([fill, ink], i) => (
                        <Swatch key={fill} $fill={fill} $ink={ink}>
                            {String(i).padStart(2, '0')}
                        </Swatch>
                    ))}
                </SwatchRow>
                <ToolSwatches>
                    <Swatch $fill="#f36926" $ink="#6b2410" $active>
                        T1
                    </Swatch>
                    <Swatch $fill="#1493d6" $ink="#fff">
                        T2
                    </Swatch>
                </ToolSwatches>
            </Palette>
            <StatusBar>
                {['Move', 'Size', 'Rotate', 'Shear'].map(name => (
                    <Check key={name}>
                        <Toggle type="checkbox" defaultChecked />
                        {name}
                    </Check>
                ))}
                <Coordinates>x: 625.86, y: 180.87 mm</Coordinates>
                <span>Min (532.7x, 126.5y) to Max (802.6x, 396.3y)</span>
                <span>1 objects</span>
            </StatusBar>
        </Window>
    </Frame>
);

export default App;
